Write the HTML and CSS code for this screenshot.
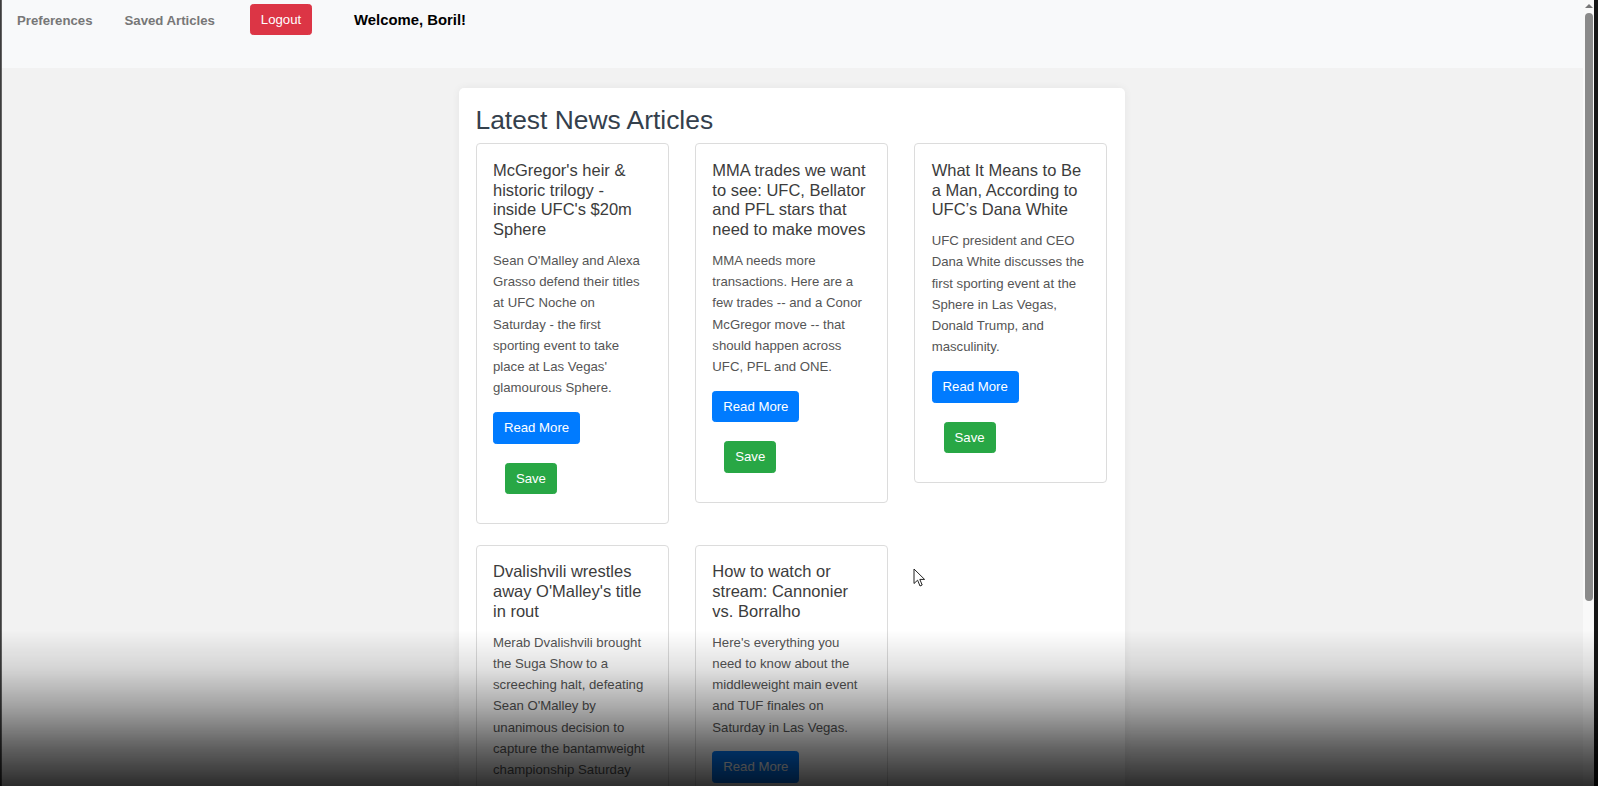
FILE: index.html
```html
<!DOCTYPE html>
<html lang="en">
<head>
<meta charset="utf-8">
<title>Latest News Articles</title>
<link rel="stylesheet" href="styles.css">
</head>
<body>
<div class="frame">
  <div class="edge-left"></div>
  <div class="app">
    <nav class="topnav">
      <a class="nav-link" href="#">Preferences</a>
      <a class="nav-link" href="#">Saved Articles</a>
      <button class="btn btn-danger logout">Logout</button>
      <span class="welcome">Welcome, Boril!</span>
    </nav>
    <main class="main">
      <section class="panel">
        <h2 class="panel-title">Latest News Articles</h2>
        <div class="cards">
          <article class="card">
            <h5 class="card-title">McGregor's heir &amp; historic trilogy - inside UFC's $20m Sphere</h5>
            <p class="card-text">Sean O'Malley and Alexa Grasso defend their titles at UFC Noche on Saturday - the first sporting event to take place at Las Vegas' glamourous Sphere.</p>
            <a class="btn btn-primary" href="#">Read More</a>
            <form class="save-form"><button class="btn btn-success" type="button">Save</button></form>
          </article>
          <article class="card">
            <h5 class="card-title">MMA trades we want to see: UFC, Bellator and PFL stars that need to make moves</h5>
            <p class="card-text">MMA needs more transactions. Here are a few trades -- and a Conor McGregor move -- that should happen across UFC, PFL and ONE.</p>
            <a class="btn btn-primary" href="#">Read More</a>
            <form class="save-form"><button class="btn btn-success" type="button">Save</button></form>
          </article>
          <article class="card">
            <h5 class="card-title">What It Means to Be a Man, According to UFC’s Dana White</h5>
            <p class="card-text">UFC president and CEO Dana White discusses the first sporting event at the Sphere in Las Vegas, Donald Trump, and masculinity.</p>
            <a class="btn btn-primary" href="#">Read More</a>
            <form class="save-form"><button class="btn btn-success" type="button">Save</button></form>
          </article>
          <article class="card">
            <h5 class="card-title">Dvalishvili wrestles away O'Malley's title in rout</h5>
            <p class="card-text">Merab Dvalishvili brought the Suga Show to a screeching halt, defeating Sean O'Malley by unanimous decision to capture the bantamweight championship Saturday night at UFC 306.</p>
            <a class="btn btn-primary" href="#">Read More</a>
            <form class="save-form"><button class="btn btn-success" type="button">Save</button></form>
          </article>
          <article class="card">
            <h5 class="card-title">How to watch or stream: Cannonier vs. Borralho</h5>
            <p class="card-text">Here's everything you need to know about the middleweight main event and TUF finales on Saturday in Las Vegas.</p>
            <a class="btn btn-primary" href="#">Read More</a>
            <form class="save-form"><button class="btn btn-success" type="button">Save</button></form>
          </article>
        </div>
      </section>
    </main>
  </div>
  <div class="scrollbar">
    <span class="scroll-up"></span>
    <span class="scroll-thumb"></span>
  </div>
  <div class="edge-right"></div>
</div>
<svg class="cursor" width="14" height="20" viewBox="0 0 14 20" aria-hidden="true">
  <path d="M1 1 L1 15.5 L4.6 12.2 L7 18 L9.2 17 L6.8 11.4 L11.6 11.4 Z" fill="#fff" stroke="#222" stroke-width="1" stroke-linejoin="round"/>
</svg>
<div class="video-shade"></div>
</body>
</html>
```

FILE: styles.css
```css
html, body {
  margin: 0;
  padding: 0;
  height: 100%;
  overflow: hidden;
}

body {
  font-family: "Liberation Sans", Arial, sans-serif;
  font-size: 13.2px;
  line-height: 1.5;
  color: #212529;
  background: #f2f2f2;
}

.frame {
  display: flex;
  height: 100%;
}

.edge-left {
  width: 2px;
  flex: none;
  background: linear-gradient(to right, #2a2a2a, #777);
}

.edge-right {
  width: 4px;
  flex: none;
  background: #161616;
}

.app {
  flex: 1;
  min-width: 0;
  background: #f2f2f2;
}

/* ---------- top navigation ---------- */
.topnav {
  height: 68px;
  box-sizing: border-box;
  background: #f8f9fa;
  display: flex;
  align-items: center;
  padding: 3px 15px 33px;
}

.nav-link {
  font-weight: bold;
  color: #777;
  text-decoration: none;
  margin-right: 32px;
  margin-top: 3px;
}

.nav-link + .nav-link {
  margin-right: 35px;
}

.logout {
  margin-right: 42px;
  height: 31px;
  padding: 0 10px;
}

.welcome {
  font-weight: bold;
  font-size: 14.85px;
  color: #000;
  margin-top: 3px;
}

/* ---------- main panel ---------- */
.main {
  padding-top: 20px;
  display: flex;
  justify-content: center;
}

.panel {
  width: 666px;
  box-sizing: border-box;
  background: #fff;
  padding: 17px;
  margin-right: 2px;
  border-radius: 5px;
  box-shadow: 0 0 8px rgba(0, 0, 0, 0.06);
}

.panel-title {
  margin: 0 0 6.6px;
  font-size: 26.4px;
  font-weight: 500;
  line-height: 1.2;
  color: #34404c;
}

.cards {
  display: grid;
  grid-template-columns: repeat(3, 1fr);
  column-gap: 26px;
  row-gap: 21px;
  align-items: start;
}

.card {
  border: 1px solid #dcdcdc;
  border-radius: 4px;
  padding: 16.5px 17.5px 16.5px 16.5px;
  background: #fff;
}

.card-title {
  margin: 0 0 9.9px;
  font-size: 16.5px;
  font-weight: 500;
  line-height: 1.2;
  color: #3c3c3c;
}

.card-text {
  margin: 0 0 13.2px;
  line-height: 1.61;
  color: #555;
}

/* ---------- buttons ---------- */
.btn {
  display: inline-block;
  font-family: inherit;
  font-size: 13.2px;
  line-height: 19.8px;
  padding: 5px 9.9px;
  border: 1px solid transparent;
  border-radius: 3.3px;
  color: #fff;
  text-decoration: none;
  cursor: pointer;
}

.btn-primary {
  background: #007bff;
  border-color: #007bff;
}

.btn-success {
  background: #28a745;
  border-color: #28a745;
}

.btn-danger {
  background: #dc3545;
  border-color: #dc3545;
}

.save-form {
  margin: 19px 0 12px 12px;
}

/* ---------- decorative scrollbar ---------- */
.scrollbar {
  width: 11px;
  flex: none;
  background: #f9f9f9;
  display: flex;
  flex-direction: column;
  align-items: center;
}

.scroll-up {
  margin-top: 4px;
  width: 0;
  height: 0;
  border-left: 4px solid transparent;
  border-right: 4px solid transparent;
  border-bottom: 4px solid #777;
}

.scroll-thumb {
  margin-top: 5px;
  width: 8px;
  height: 588px;
  background: #8a8a8a;
  border-radius: 4px;
}

/* ---------- overlays (video frame artefacts) ---------- */
.cursor {
  position: fixed;
  left: 913px;
  top: 568px;
}

.video-shade {
  position: fixed;
  left: 0;
  right: 0;
  bottom: 0;
  height: 156px;
  pointer-events: none;
  background: linear-gradient(to bottom,
    rgba(0, 0, 0, 0) 0%,
    rgba(0, 0, 0, 0.12) 25%,
    rgba(0, 0, 0, 0.34) 50%,
    rgba(0, 0, 0, 0.6) 75%,
    rgba(0, 0, 0, 0.82) 100%);
}
```
